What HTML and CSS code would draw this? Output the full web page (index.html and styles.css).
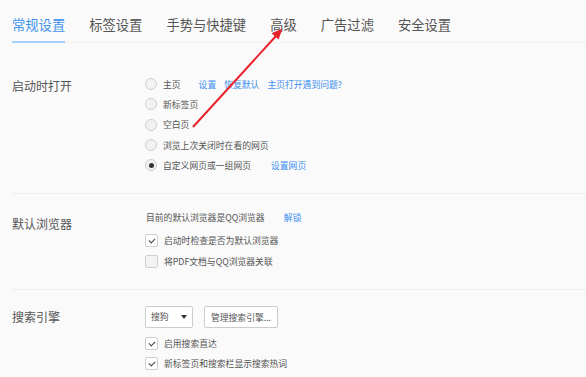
FILE: index.html
```html
<!DOCTYPE html>
<html lang="zh-CN">
<head>
    <meta charset="UTF-8">
    <title>设置</title>
    <link rel="stylesheet" href="styles.css">
</head>
<body>
    <!-- Tabs -->
    <div class="tabs">
        <a href="#" class="tab active">常规设置</a>
        <a href="#" class="tab">标签设置</a>
        <a href="#" class="tab">手势与快捷键</a>
        <a href="#" class="tab">高级</a>
        <a href="#" class="tab">广告过滤</a>
        <a href="#" class="tab">安全设置</a>
    </div>

    <!-- 启动时打开 -->
    <div class="section" id="startup">
        <div class="title">启动时打开</div>
        <div class="content">
            <div class="row"><span class="radio"></span>主页
                <span class="links first"><a href="#">设置</a><a href="#">恢复默认</a><a href="#">主页打开遇到问题?</a></span>
            </div>
            <div class="row"><span class="radio"></span>新标签页</div>
            <div class="row"><span class="radio"></span>空白页</div>
            <div class="row"><span class="radio"></span>浏览上次关闭时在看的网页</div>
            <div class="row"><span class="radio checked"></span>自定义网页或一组网页
                <span class="links"><a href="#">设置网页</a></span>
            </div>
        </div>
    </div>

    <!-- 默认浏览器 -->
    <div class="section" id="browser">
        <div class="title">默认浏览器</div>
        <div class="content">
            <div class="row info">目前的默认浏览器是QQ浏览器<span class="links"><a href="#">解锁</a></span></div>
            <div class="row"><span class="check on"></span>启动时检查是否为默认浏览器</div>
            <div class="row"><span class="check"></span>将PDF文档与QQ浏览器关联</div>
        </div>
    </div>

    <!-- 搜索引擎 -->
    <div class="section last" id="search">
        <div class="title">搜索引擎</div>
        <div class="content">
            <div class="controls">
                <div class="select">搜狗<span class="caret"></span></div>
                <button>管理搜索引擎...</button>
            </div>
            <div class="row"><span class="check on"></span>启用搜索直达</div>
            <div class="row"><span class="check on"></span>新标签页和搜索栏显示搜索热词</div>
        </div>
    </div>

    <!-- annotation arrow -->
    <svg class="arrow" width="586" height="377" viewBox="0 0 586 377">
        <line x1="193" y1="127" x2="276" y2="36" stroke="#e8202a" stroke-width="2"/>
        <polygon points="282.5,28.5 278.6,39.6 271.6,33.2" fill="#e8202a"/>
    </svg>
</body>
</html>
```

FILE: styles.css
```css
* {
    margin: 0;
    padding: 0;
    box-sizing: border-box;
}
body {
    font-family: "Noto Sans CJK SC", "Noto Sans", sans-serif;
    background: #fafafa;
    color: #555;
    width: 586px;
    height: 377px;
    overflow: hidden;
    position: relative;
}
a {
    text-decoration: none;
}

/* Tabs */
.tabs {
    display: flex;
    gap: 24px;
    margin-left: 12px;
    height: 43px;
    border-bottom: 1px solid #f0f0f0;
}
.tab {
    font-size: 13.3px;
    line-height: 16px;
    padding-top: 17px;
    color: #555;
    border-bottom: 2px solid transparent;
    margin-bottom: -1px;
}
.tab.active {
    color: #3f93ee;
    border-bottom-color: #a3d1fb;
}

/* Sections */
.section {
    display: flex;
    margin-left: 12px;
    border-bottom: 1px solid #efefef;
}
.section.last {
    border-bottom: none;
}
#startup {
    padding: 31px 0 18px;
}
#browser {
    padding: 13px 0 18px;
}
#search {
    padding: 16px 0 0;
}
.title {
    width: 133px;
    font-size: 12px;
    line-height: 20px;
    padding-top: 2px;
    color: #555;
}
#browser .title {
    padding-top: 7px;
}
#search .title {
    line-height: 22px;
    padding-top: 0;
}
.content {
    font-size: 8.8px;
    color: #555;
}
.row {
    display: flex;
    align-items: center;
    height: 20.3px;
    white-space: nowrap;
}
.row.info {
    margin-bottom: 3px;
    padding-left: 1px;
}
.links {
    display: flex;
    gap: 8px;
    margin-left: 20px;
}
.links.first {
    margin-left: 18px;
}
.links a {
    color: #3f8ff0;
}
.row.info .links {
    margin-left: 19px;
}

/* Radio */
.radio {
    width: 12px;
    height: 12px;
    border: 1px solid #cfcfcf;
    border-radius: 50%;
    background: #f2f2f2;
    margin-right: 6px;
    display: flex;
    align-items: center;
    justify-content: center;
}
.radio.checked::after {
    content: "";
    width: 5px;
    height: 5px;
    border-radius: 50%;
    background: #333;
}

/* Checkbox */
.check {
    width: 13px;
    height: 13px;
    border: 1px solid #cfcfcf;
    border-radius: 2px;
    background: #f3f3f3;
    margin-right: 6px;
    position: relative;
}
.check.on {
    background: #fff;
}
.check.on::after {
    content: "";
    position: absolute;
    left: 3px;
    top: 1px;
    width: 5px;
    height: 3px;
    border-left: 1.5px solid #444;
    border-bottom: 1.5px solid #444;
    transform: translateY(2px) rotate(-45deg);
}

/* Search controls */
.controls {
    display: flex;
    gap: 11px;
    margin-bottom: 5px;
}
.select {
    width: 48px;
    height: 22px;
    border: 1px solid #ccc;
    background: #fff;
    border-radius: 2px;
    padding-left: 5px;
    line-height: 20px;
    position: relative;
}
.caret {
    position: absolute;
    right: 5px;
    top: 8px;
    border-left: 3.5px solid transparent;
    border-right: 3.5px solid transparent;
    border-top: 4px solid #333;
}
button {
    font-family: inherit;
    font-size: 8.8px;
    color: #555;
    width: 74px;
    height: 22px;
    border: 1px solid #ccc;
    border-radius: 2px;
    background: #fff;
}

/* Arrow overlay */
.arrow {
    position: absolute;
    left: 0;
    top: 0;
    pointer-events: none;
}
```
